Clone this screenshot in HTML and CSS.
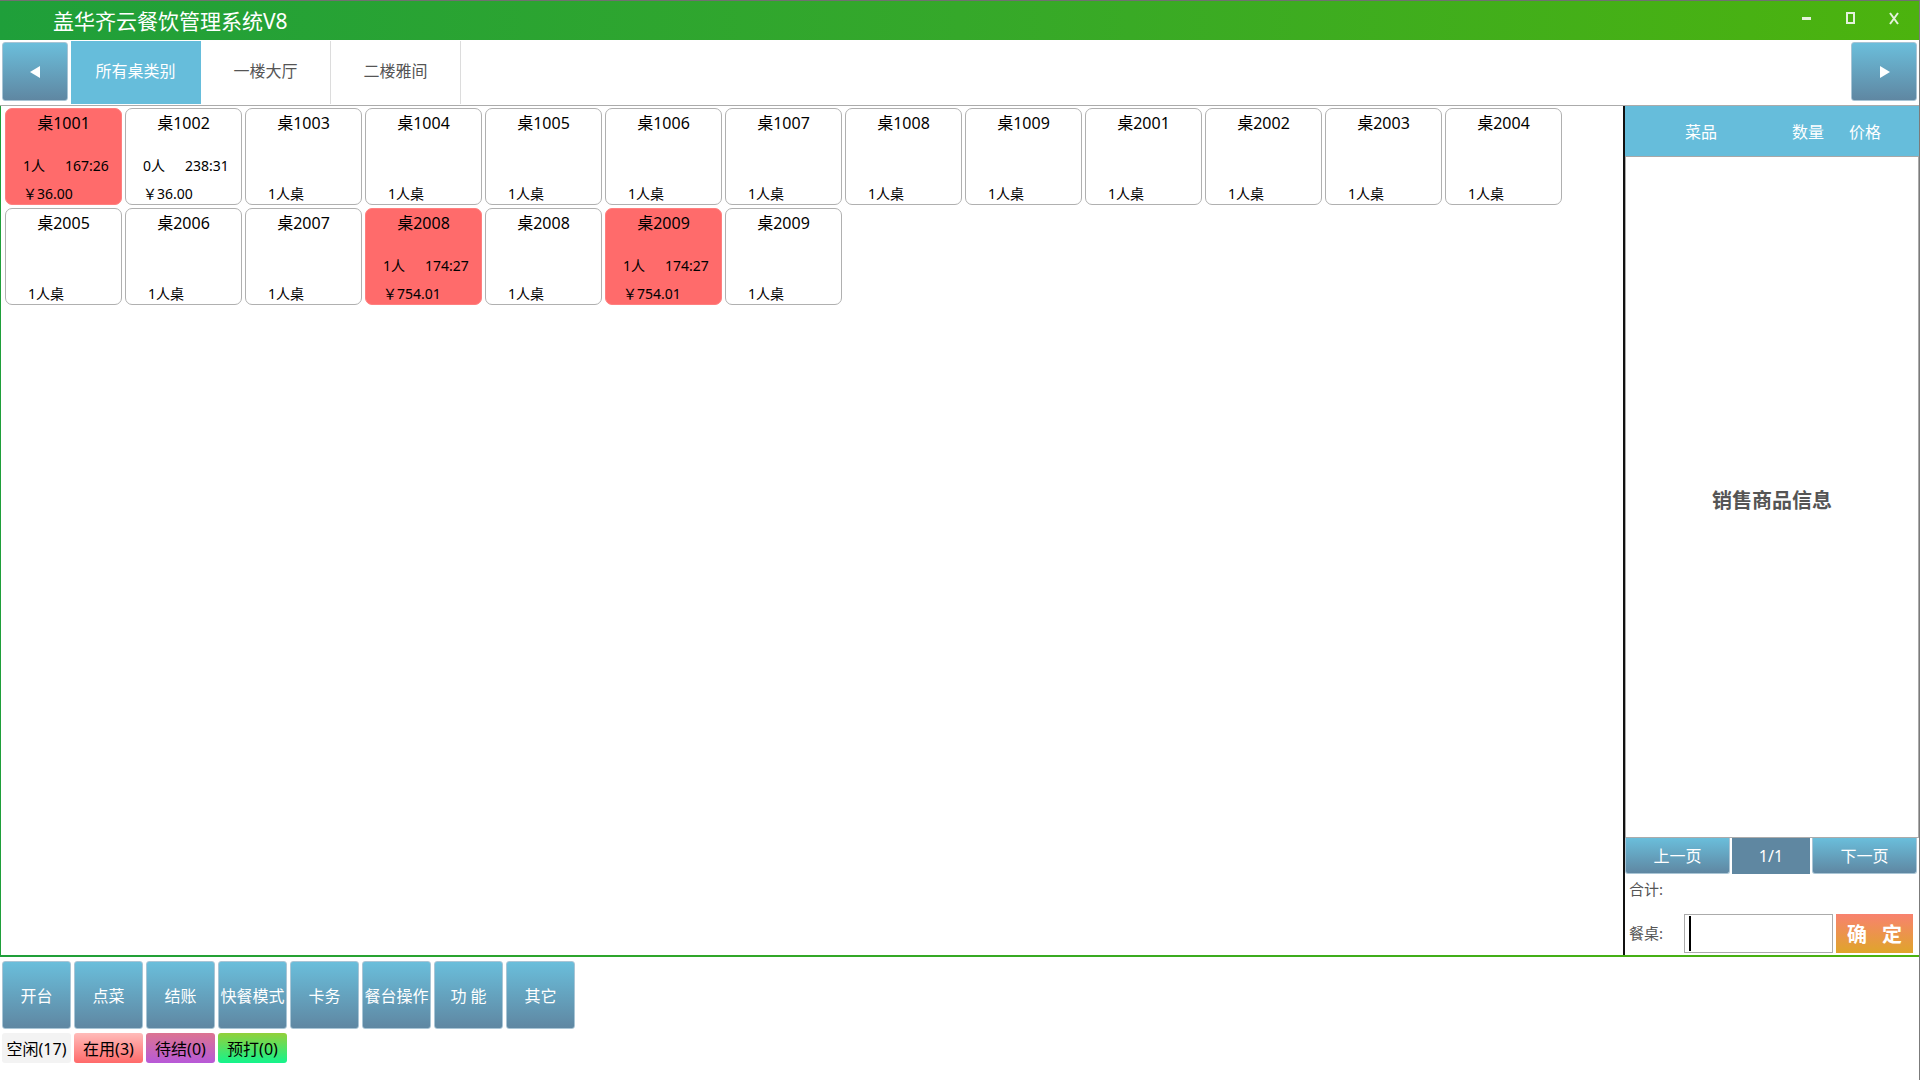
FILE: index.html
```html
<!DOCTYPE html>
<html lang="zh-CN">
<head>
<meta charset="utf-8">
<title>盖华齐云餐饮管理系统V8</title>
<link rel="stylesheet" href="styles.css">
</head>
<body>
<div class="app">
  <header class="titlebar">
    <div class="app-title">盖华齐云餐饮管理系统V8</div>
    <div class="win-ctrls">
      <span class="win-btn"><svg width="9" height="3" viewBox="0 0 9 3"><rect x="0" y="0" width="9" height="3" fill="#e4f2dc"/></svg></span>
      <span class="win-btn"><svg width="9" height="12" viewBox="0 0 9 12"><rect x="1" y="1" width="7" height="10" fill="none" stroke="#e4f2dc" stroke-width="2"/></svg></span>
      <span class="win-btn"><svg width="10" height="13" viewBox="0 0 10 13"><path d="M1 1 L9 12 M9 1 L1 12" stroke="#e4f2dc" stroke-width="2" fill="none"/></svg></span>
    </div>
  </header>

  <nav class="tabbar">
    <button class="nav-arrow"><svg width="11" height="12" viewBox="0 0 11 12"><path d="M10 0 L0 6 L10 12 Z" fill="#fff"/></svg></button>
    <div class="tab tab-active">所有桌类别</div>
    <div class="tab">一楼大厅</div>
    <div class="tab">二楼雅间</div>
    <button class="nav-arrow nav-right"><svg width="11" height="12" viewBox="0 0 11 12"><path d="M1 0 L11 6 L1 12 Z" fill="#fff"/></svg></button>
  </nav>

  <main class="workspace">
    <section class="tables">
      <div class="card busy"><div class="name">桌1001</div><div class="info"><span class="ppl">1人</span><span>167:26</span></div><div class="foot price">￥36.00</div></div>
      <div class="card"><div class="name">桌1002</div><div class="info"><span class="ppl">0人</span><span>238:31</span></div><div class="foot price">￥36.00</div></div>
      <div class="card"><div class="name">桌1003</div><div class="info"></div><div class="foot">1人桌</div></div>
      <div class="card"><div class="name">桌1004</div><div class="info"></div><div class="foot">1人桌</div></div>
      <div class="card"><div class="name">桌1005</div><div class="info"></div><div class="foot">1人桌</div></div>
      <div class="card"><div class="name">桌1006</div><div class="info"></div><div class="foot">1人桌</div></div>
      <div class="card"><div class="name">桌1007</div><div class="info"></div><div class="foot">1人桌</div></div>
      <div class="card"><div class="name">桌1008</div><div class="info"></div><div class="foot">1人桌</div></div>
      <div class="card"><div class="name">桌1009</div><div class="info"></div><div class="foot">1人桌</div></div>
      <div class="card"><div class="name">桌2001</div><div class="info"></div><div class="foot">1人桌</div></div>
      <div class="card"><div class="name">桌2002</div><div class="info"></div><div class="foot">1人桌</div></div>
      <div class="card"><div class="name">桌2003</div><div class="info"></div><div class="foot">1人桌</div></div>
      <div class="card"><div class="name">桌2004</div><div class="info"></div><div class="foot">1人桌</div></div>
      <div class="card"><div class="name">桌2005</div><div class="info"></div><div class="foot">1人桌</div></div>
      <div class="card"><div class="name">桌2006</div><div class="info"></div><div class="foot">1人桌</div></div>
      <div class="card"><div class="name">桌2007</div><div class="info"></div><div class="foot">1人桌</div></div>
      <div class="card busy"><div class="name">桌2008</div><div class="info"><span class="ppl">1人</span><span>174:27</span></div><div class="foot price">￥754.01</div></div>
      <div class="card"><div class="name">桌2008</div><div class="info"></div><div class="foot">1人桌</div></div>
      <div class="card busy"><div class="name">桌2009</div><div class="info"><span class="ppl">1人</span><span>174:27</span></div><div class="foot price">￥754.01</div></div>
      <div class="card"><div class="name">桌2009</div><div class="info"></div><div class="foot">1人桌</div></div>
    </section>

    <aside class="order">
      <div class="order-head">
        <span>菜品</span><span>数量</span><span>价格</span><span></span>
      </div>
      <div class="order-list">销售商品信息</div>
      <div class="pager">
        <button class="pg-btn">上一页</button>
        <div class="pg-num">1/1</div>
        <button class="pg-btn">下一页</button>
      </div>
      <div class="sum-row">合计:</div>
      <div class="desk-row">
        <span class="desk-label">餐桌:</span>
        <div class="desk-input"><span class="caret"></span></div>
        <button class="ok-btn">确 定</button>
      </div>
    </aside>
  </main>

  <footer class="toolbar">
    <div class="tool-row">
      <button class="tool">开台</button>
      <button class="tool">点菜</button>
      <button class="tool">结账</button>
      <button class="tool">快餐模式</button>
      <button class="tool">卡务</button>
      <button class="tool">餐台操作</button>
      <button class="tool">功 能</button>
      <button class="tool">其它</button>
    </div>
    <div class="status-row">
      <span class="chip chip-free">空闲(17)</span>
      <span class="chip chip-used">在用(3)</span>
      <span class="chip chip-wait">待结(0)</span>
      <span class="chip chip-pre">预打(0)</span>
    </div>
  </footer>
</div>
</body>
</html>
```
FILE: styles.css
```css
* { box-sizing: border-box; }

html, body {
  margin: 0;
  padding: 0;
  width: 1920px;
  height: 1080px;
  overflow: hidden;
  background: #fff;
}

body {
  font-family: "Noto Sans", "Noto Sans CJK SC", sans-serif;
  color: #000;
}

button {
  font-family: inherit;
  padding: 0;
  margin: 0;
  cursor: pointer;
}

.app {
  width: 1920px;
  height: 1080px;
  border-right: 1px solid #7b7b7b;
  display: flex;
  flex-direction: column;
}

/* ---------- title bar ---------- */
.titlebar {
  height: 40px;
  flex: none;
  border-top: 1px solid #707070;
  background: linear-gradient(90deg, #1f9f3a 0%, #35a82a 50%, #4cb30e 100%);
  display: flex;
  align-items: center;
  padding-left: 53px;
}

.app-title {
  color: #fff;
  font-size: 21px;
  line-height: 26px;
}

.win-ctrls {
  margin-left: auto;
  margin-right: 3px;
  display: flex;
  align-self: flex-start;
  padding-top: 10px;
}

.win-btn {
  width: 44px;
  height: 14px;
  display: flex;
  align-items: center;
  justify-content: center;
}

/* ---------- category tabs ---------- */
.tabbar {
  height: 66px;
  flex: none;
  display: flex;
  align-items: stretch;
  border-bottom: 1px solid #ababab;
  padding: 1px 0 0 0;
}

.nav-arrow {
  width: 66px;
  height: 59px;
  margin: 1px 3px 0 2px;
  border: 1px solid #a8c4d4;
  border-radius: 3px;
  background: linear-gradient(180deg, #6bbedb 0%, #5f87a2 100%);
  display: flex;
  align-items: center;
  justify-content: center;
}

.nav-right {
  margin-left: auto;
  margin-right: 2px;
}

.tab {
  width: 130px;
  margin-bottom: 1px;
  padding-bottom: 5px;
  border-right: 1px solid #dcdcdc;
  display: flex;
  align-items: center;
  justify-content: center;
  font-size: 16px;
  color: #555;
}

.tab-active {
  background: #66bddb;
  color: #fff;
  border-right-color: #66bddb;
}

/* ---------- main area ---------- */
.workspace {
  height: 851px;
  flex: none;
  display: flex;
  border-left: 1px solid #2aa13c;
  border-bottom: 2px solid #3aac24;
  border-image: linear-gradient(90deg, #1f9f3a, #4cb30e) 1;
  border-top: 0;
  border-right: 0;
}

.tables {
  width: 1622px;
  flex: none;
  padding: 2px 0 0 4px;
  display: flex;
  flex-wrap: wrap;
  align-content: flex-start;
  gap: 3px;
}

.card {
  width: 117px;
  height: 97px;
  border: 1px solid #b0b0b0;
  border-radius: 7px;
  background: #fff;
  padding-top: 3px;
  display: flex;
  flex-direction: column;
  font-size: 14px;
}

.card.busy {
  background: #ff6b6b;
  border-color: #ff7f7f;
}

.name {
  height: 22px;
  line-height: 22px;
  text-align: center;
  font-size: 16px;
}

.info {
  margin-top: 22px;
  height: 20px;
  line-height: 20px;
  padding-left: 17px;
  display: flex;
}

.ppl {
  width: 42px;
}

.foot {
  margin-top: 8px;
  height: 20px;
  line-height: 20px;
  padding-left: 22px;
}

.foot.price {
  padding-left: 17px;
}

/* ---------- order panel ---------- */
.order {
  width: 296px;
  flex: none;
  border-left: 2px solid #111;
  display: flex;
  flex-direction: column;
}

.order-head {
  height: 51px;
  flex: none;
  background: #66bddb;
  border-bottom: 1px solid #a8a8a8;
  display: grid;
  grid-template-columns: 152px 62px 52px 1fr;
  align-items: center;
  color: #fff;
  font-size: 16px;
  text-align: center;
}

.order-list {
  height: 681px;
  flex: none;
  border: 1px solid #ababab;
  border-top: 0;
  padding-top: 5px;
  display: flex;
  align-items: center;
  justify-content: center;
  font-size: 20px;
  font-weight: bold;
  color: #555;
}

.pager {
  height: 36px;
  flex: none;
  display: flex;
  gap: 2px;
}

.pg-btn {
  width: 105px;
  height: 36px;
  border: 1px solid #a9c5d5;
  border-top: 0;
  border-radius: 0 0 3px 3px;
  background: linear-gradient(180deg, #6abedb 0%, #5f87a2 100%);
  color: #fff;
  font-size: 16px;
  padding-bottom: 2px;
}

.pg-num {
  width: 78px;
  background: #5f87a1;
  color: #fff;
  font-size: 16px;
  display: flex;
  align-items: center;
  justify-content: center;
}

.sum-row {
  height: 32px;
  line-height: 30px;
  padding-left: 4px;
  font-size: 15px;
  color: #555;
}

.desk-row {
  margin-top: 8px;
  height: 39px;
  display: flex;
  align-items: stretch;
  padding-left: 4px;
}

.desk-label {
  width: 55px;
  display: flex;
  align-items: center;
  padding-bottom: 2px;
  font-size: 15px;
  color: #555;
}

.desk-input {
  width: 149px;
  border: 1px solid #ababab;
  background: #fff;
  padding: 1px 0 0 4px;
}

.caret {
  display: block;
  width: 2px;
  height: 35px;
  background: #000;
}

.ok-btn {
  width: 77px;
  margin-left: 3px;
  border: 0;
  background: linear-gradient(180deg, #f8826f 0%, #dfa52a 100%);
  color: #fff;
  font-size: 20px;
  font-weight: bold;
  letter-spacing: 5px;
  padding-left: 5px;
}

/* ---------- bottom toolbar ---------- */
.toolbar {
  flex: 1;
  padding: 4px 0 0 2px;
}

.tool-row,
.status-row {
  display: flex;
  gap: 3px;
}

.tool {
  width: 69px;
  height: 68px;
  border: 1px solid #a9c5d5;
  border-radius: 3px;
  background: linear-gradient(180deg, #6abedb 0%, #5f87a2 100%);
  color: #fff;
  font-size: 16px;
  white-space: nowrap;
}

.status-row {
  margin-top: 4px;
}

.chip {
  width: 69px;
  height: 30px;
  border-radius: 3px;
  display: flex;
  align-items: center;
  justify-content: center;
  font-size: 16px;
  color: #000;
  white-space: nowrap;
}

.chip-free {
  background: #f3f3f3;
}

.chip-used {
  background: linear-gradient(180deg, #ffbcba 0%, #ff6a6a 100%);
}

.chip-wait {
  background: linear-gradient(180deg, #dc7491 0%, #b759d8 100%);
}

.chip-pre {
  background: linear-gradient(180deg, #93d03a 0%, #14f48c 100%);
}
```
